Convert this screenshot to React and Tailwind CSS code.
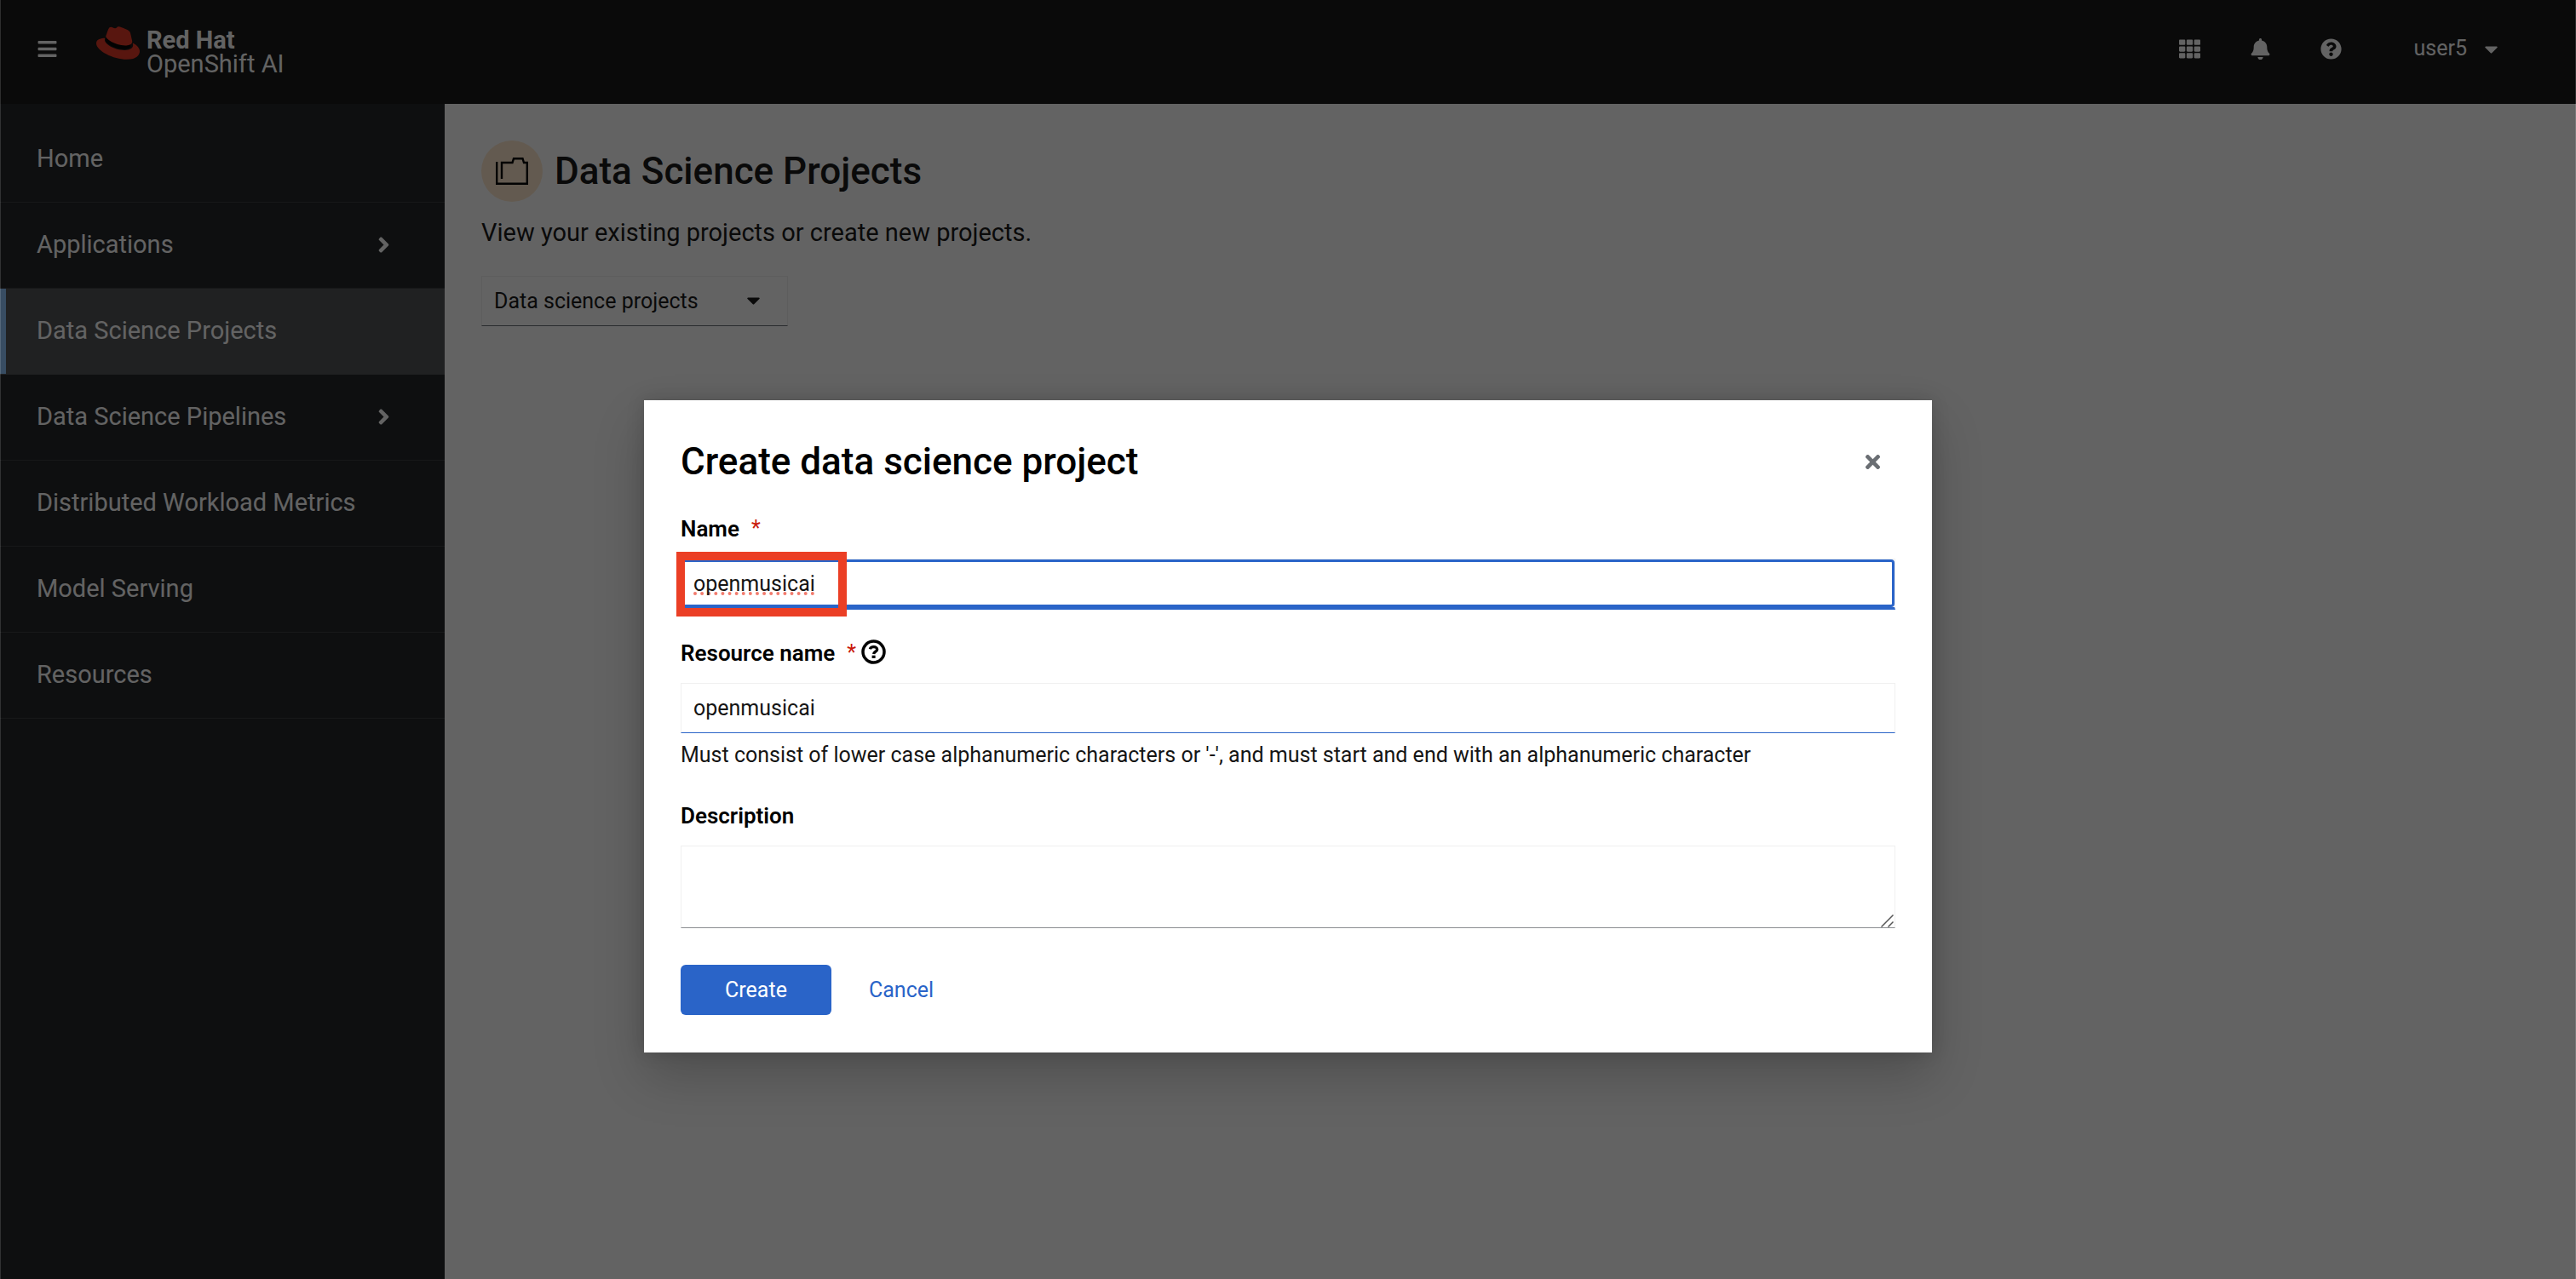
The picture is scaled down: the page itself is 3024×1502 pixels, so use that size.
import { FaBars, FaRedhat, FaTh, FaBell, FaQuestionCircle, FaCaretDown, FaAngleRight, FaTimes } from "react-icons/fa";

const NAV_ITEMS = [
  { label: "Home" },
  { label: "Applications", expandable: true },
  { label: "Data Science Projects", active: true },
  { label: "Data Science Pipelines", expandable: true },
  { label: "Distributed Workload Metrics" },
  { label: "Model Serving" },
  { label: "Resources" },
];

function HatLogo() {
  return (
    <svg viewBox="0 0 512 512" className="h-[51px] w-[51px]" aria-hidden="true">
      <path d="M112 190 L400 250 L404 300 C380 345 200 335 108 240 Z" fill="#000" />
      <FaRedhat size={512} color="#e23622" />
    </svg>
  );
}

function FoldersIcon() {
  return (
    <svg viewBox="0 0 38 32" className="h-8 w-[38px]" fill="none" stroke="#000" strokeWidth="2.400" aria-hidden="true">
      <path d="M1.200 5 V30.800 H36.800 V6 H33 L31.500 1.200 H21 L19.500 6 H7 V25" />
    </svg>
  );
}

function HelpIcon() {
  return (
    <svg viewBox="0 0 29 29" className="h-[29px] w-[29px]" fill="none" aria-hidden="true">
      <circle cx="14.500" cy="14.500" r="12.500" stroke="#000" strokeWidth="3.500" />
      <path
        d="M10.300 11.300 C11 9.300 12.500 8.700 14.600 8.700 C16.900 8.700 18.700 9.900 18.700 11.700 C18.700 14 14.900 14.200 14.600 17"
        stroke="#000"
        strokeWidth="3.300"
      />
      <rect x="12.600" y="18.700" width="4" height="3.300" fill="#000" />
    </svg>
  );
}

function ResizeGrip() {
  return (
    <svg viewBox="0 0 15 15" className="pointer-events-none absolute right-0.5 bottom-px h-[15px] w-[15px]" stroke="#555" strokeWidth="1.500" aria-hidden="true">
      <path d="M0.500 14.500 L14.500 0.500 M8.500 14.500 L14.500 8.500" />
    </svg>
  );
}

function Masthead() {
  return (
    <header className="flex h-[122px] items-center bg-[#151515] pr-[87px] pl-[43px] text-white">
      <button type="button" aria-label="Toggle navigation" className="flex w-[70px] pb-2">
        <FaBars size={25} />
      </button>
      <a href="#home" className="flex items-start pb-1">
        <span className="-mt-1">
          <HatLogo />
        </span>
        <span className="ml-2 flex flex-col pt-1 text-[29px] leading-[28px]">
          <span className="font-bold">Red Hat</span>
          <span>OpenShift AI</span>
        </span>
      </a>
      <div className="ml-auto flex items-center pb-2">
        <button type="button" aria-label="Applications" className="flex w-[83px] justify-center">
          <FaTh size={25} />
        </button>
        <button type="button" aria-label="Notifications" className="flex w-[83px] justify-center">
          <FaBell size={25} />
        </button>
        <button type="button" aria-label="Help" className="flex w-[83px] justify-center">
          <FaQuestionCircle size={25} />
        </button>
        <button type="button" className="ml-14 flex items-center gap-4 text-[25px] leading-[38px]">
          user5
          <FaCaretDown size={25} />
        </button>
      </div>
    </header>
  );
}

function Sidebar() {
  return (
    <nav aria-label="Global" className="w-[522px] shrink-0 bg-[#212427] pt-[15px] text-[29px] leading-[44px] text-white">
      <ul>
        {NAV_ITEMS.map(({ label, expandable, active }) => (
          <li
            key={label}
            className={
              active
                ? "border-b border-[#4f5255] bg-[#4f5255] shadow-[inset_7px_0_0_#8fc5ff]"
                : "border-b border-[#383b3e]"
            }
          >
            {expandable ? (
              <button type="button" aria-expanded="false" className="flex h-[100px] w-full items-center justify-between pr-[57px] pb-0.5 pl-[43px]">
                {label}
                <FaAngleRight size={29} />
              </button>
            ) : (
              <a href="#nav" aria-current={active ? "page" : undefined} className="flex h-[100px] items-center pb-0.5 pl-[43px]">
                {label}
              </a>
            )}
          </li>
        ))}
      </ul>
    </nav>
  );
}

function ProjectsPage() {
  return (
    <main className="flex-1 bg-white px-[43px] pt-[43px] text-[#151515]">
      <div className="flex items-center gap-3.5">
        <span className="flex h-[72px] w-[72px] items-center justify-center rounded-full bg-[#ffe8cc]">
          <FoldersIcon />
        </span>
        <h1 className="text-[44px] leading-[56px] font-medium">Data Science Projects</h1>
      </div>
      <p className="mt-3.5 text-[29px] leading-[44px]">View your existing projects or create new projects.</p>
      <div className="relative mt-[29px] w-[360px]">
        <select
          aria-label="Project type"
          className="h-[59px] w-full appearance-none border border-[#f0f0f0] border-b-[#6a6e73] bg-white px-3.5 text-[25px] leading-[38px]"
        >
          <option>Data science projects</option>
        </select>
        <FaCaretDown size={25} className="pointer-events-none absolute top-4 right-7" />
      </div>
    </main>
  );
}

function Required() {
  return (
    <span aria-hidden="true" className="ml-3.5 text-[25px] font-normal text-[#c9190b]">
      *
    </span>
  );
}

function CreateProjectDialog() {
  return (
    <div
      role="dialog"
      aria-modal="true"
      aria-labelledby="dialog-title"
      className="w-1/2 bg-white px-[43px] pt-11 pb-11 text-[25px] leading-[38px] text-[#151515] shadow-[0_28px_56px_rgba(3,3,3,0.2),0_0_20px_rgba(3,3,3,0.14)]"
    >
      <div className="flex items-center justify-between">
        <h2 id="dialog-title" className="text-[44px] leading-[56px] font-medium text-black">
          Create data science project
        </h2>
        <button type="button" aria-label="Close" className="flex w-[54px] justify-center text-[#6a6e73]">
          <FaTimes size={25} />
        </button>
      </div>
      <form className="mt-8 flex flex-col gap-8">
        <div className="flex flex-col gap-4">
          <label htmlFor="project-name" className="flex text-[26px] font-semibold text-black">
            Name
            <Required />
          </label>
          <div className="relative border border-b-[3px] border-[#f0f0f0] border-b-[#2a64c8]">
            <input
              id="project-name"
              defaultValue="openmusicai"
              spellCheck="false"
              className="block h-14 w-full rounded border-[3px] border-[#2a64c8] bg-white px-[11px] underline decoration-[#f27b6d] decoration-dotted decoration-4 underline-offset-2 outline-none [text-decoration-skip-ink:none]"
            />
            <span aria-hidden="true" className="pointer-events-none absolute -top-[9px] -left-[6px] h-[76px] w-[200px] border-[10px] border-[#eb3f25]" />
          </div>
        </div>
        <div className="flex flex-col">
          <div className="flex items-center">
            <label htmlFor="resource-name" className="flex text-[26px] font-semibold text-black">
              Resource name
              <Required />
            </label>
            <button type="button" aria-label="More info for resource name" className="ml-1.5 flex pb-1">
              <HelpIcon />
            </button>
          </div>
          <input
            id="resource-name"
            defaultValue="openmusicai"
            aria-describedby="resource-help"
            className="mt-4 h-[59px] w-full border border-[#f0f0f0] border-b-[#2a64c8] bg-white px-3.5"
          />
          <p id="resource-help" className="mt-[7px] pb-px">
            Must consist of lower case alphanumeric characters or '-', and must start and end with an alphanumeric character
          </p>
        </div>
        <div className="flex flex-col gap-4">
          <label htmlFor="description" className="text-[26px] font-semibold text-black">
            Description
          </label>
          <div className="relative">
            <textarea
              id="description"
              className="block h-[97px] w-full resize-none border border-[#f0f0f0] border-b-[#8a8d90] bg-white px-3.5 py-2.5"
            />
            <ResizeGrip />
          </div>
        </div>
        <div className="mt-[11px] flex gap-11">
          <button type="submit" className="h-[59px] w-[177px] rounded-md bg-[#2a64c8] text-white">
            Create
          </button>
          <button type="button" className="h-[59px] text-[#2a64c8]">
            Cancel
          </button>
        </div>
      </form>
    </div>
  );
}

export default function App() {
  return (
    <div className="relative flex min-h-screen flex-col font-['Roboto',sans-serif]">
      <Masthead />
      <div className="flex flex-1">
        <Sidebar />
        <ProjectsPage />
      </div>
      <div className="absolute inset-0 flex items-center justify-center bg-[#030303]/62 pt-[204px] shadow-[inset_1px_0_0_rgba(255,255,255,0.15),inset_-1px_0_0_rgba(255,255,255,0.15)]">
        <CreateProjectDialog />
      </div>
    </div>
  );
}
